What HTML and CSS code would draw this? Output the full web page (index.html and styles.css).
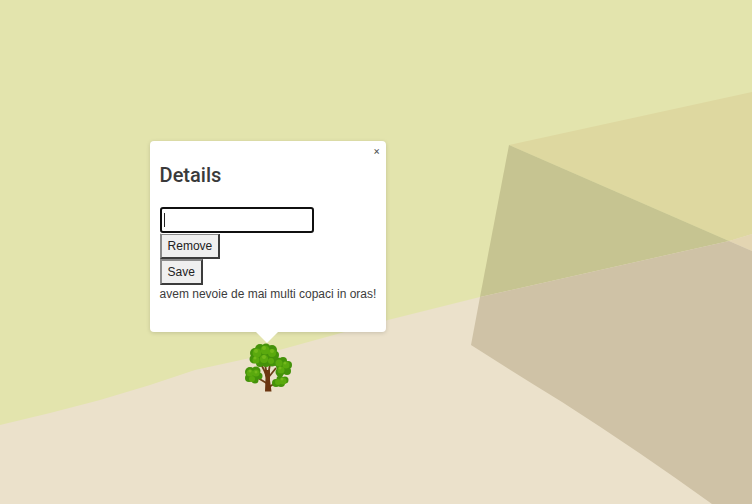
FILE: index.html
```html
<!DOCTYPE html>
<html lang="en">
<head>
  <meta charset="UTF-8">
  <title>Map</title>
  <link rel="stylesheet" href="styles.css">
</head>
<body>
  <div class="map">
    <svg class="map-bg" width="752" height="504" viewBox="0 0 752 504">
      <rect class="land" width="752" height="504"/>
      <path class="grass" d="M0 0H752V234L729 241L480 297L388 320L250 358L195 370L150 385L100 400L50 413L0 425Z"/>
      <path class="roof-grass" d="M509 145L752 92V234L729 241Z"/>
      <path class="roof-land" d="M729 241L752 234V251Z"/>
      <path class="block-grass" d="M509 145L729 241L480 297Z"/>
      <path class="block-land" d="M480 297L729 241L752 251V504H712Q640 452 562 402Q515 373 471 345Z"/>
    </svg>

    <div class="popup">
      <button class="popup-close" type="button">×</button>
      <h3>Details</h3>
      <div class="popup-form">
        <div class="field">
          <input type="text" autofocus>
          <span class="caret"></span>
        </div>
        <button type="button">Remove</button>
        <button type="button">Save</button>
      </div>
      <p>avem nevoie de mai multi copaci in oras!</p>
      <div class="popup-tip"></div>
    </div>

    <svg class="marker" width="50" height="50" viewBox="244 343 50 50">
      <path class="branches" d="M267 376L261 364M267 376L265 364M268 376L270 364M268 378L276 368M268 384L258 378M269 387L277 382"/>
      <path class="trunk" d="M265 391.500L265.500 378L264 370L270 370L270 380L271.500 391.500Z"/>
      <g class="leaf-dark">
        <circle cx="255" cy="353" r="5"/><circle cx="260" cy="349" r="5"/><circle cx="266" cy="348" r="4.500"/><circle cx="272" cy="350" r="5"/><circle cx="275" cy="355" r="4"/>
        <circle cx="254" cy="359" r="4.500"/><circle cx="260" cy="363" r="4"/><circle cx="266" cy="363" r="4"/><circle cx="272" cy="362" r="4.500"/><circle cx="264" cy="355" r="9"/>
        <circle cx="278" cy="362" r="4.500"/><circle cx="283" cy="361" r="4"/><circle cx="288" cy="365" r="4"/><circle cx="287" cy="371" r="4"/><circle cx="280" cy="372" r="4.500"/><circle cx="282" cy="366" r="6"/>
        <circle cx="250" cy="372" r="5"/><circle cx="256" cy="371" r="4.500"/><circle cx="259" cy="376" r="3.500"/><circle cx="249" cy="378" r="4"/><circle cx="255" cy="380" r="3.500"/><circle cx="253" cy="375" r="6"/>
        <circle cx="276" cy="383" r="4"/><circle cx="280" cy="379" r="3.500"/><circle cx="285" cy="380" r="3.500"/><circle cx="281" cy="383" r="4"/>
      </g>
      <g class="leaf-mid">
        <circle cx="257" cy="353" r="4.500"/><circle cx="265" cy="350" r="4.500"/><circle cx="272" cy="353" r="4"/>
        <circle cx="256" cy="360" r="3.500"/><circle cx="264" cy="359" r="4"/><circle cx="271" cy="361" r="3"/>
        <circle cx="279" cy="363" r="3.500"/><circle cx="286" cy="365" r="3.500"/><circle cx="281" cy="370" r="3.500"/>
        <circle cx="250" cy="373" r="3.500"/><circle cx="256" cy="373" r="3.500"/><circle cx="252" cy="379" r="3"/>
        <circle cx="278" cy="382" r="3"/><circle cx="283" cy="381" r="3.500"/>
      </g>
      <g class="leaf-light">
        <circle cx="256" cy="351" r="2"/><circle cx="264" cy="348" r="2"/><circle cx="272" cy="351" r="2"/>
        <circle cx="255" cy="358" r="1.500"/><circle cx="264" cy="357" r="2"/>
        <circle cx="285" cy="363" r="1.500"/><circle cx="280" cy="368" r="1.500"/>
        <circle cx="250" cy="371" r="1.500"/><circle cx="256" cy="372" r="1.500"/><circle cx="282" cy="379" r="1.500"/>
      </g>
    </svg>
  </div>
</body>
</html>
```

FILE: styles.css
```css
body {
  margin: 0;
  font-family: "Liberation Sans", Arial, sans-serif;
  overflow: hidden;
}
.map {
  position: relative;
  width: 752px;
  height: 504px;
  overflow: hidden;
  background: #ebe1cb;
}
.map-bg {
  position: absolute;
  top: 0;
  left: 0;
}
.land {
  fill: #ebe1cb;
}
.grass {
  fill: #e3e4ad;
}
.roof-grass {
  fill: #ded8a0;
}
.roof-land {
  fill: #e3d5b2;
}
.block-grass {
  fill: #c6c491;
}
.block-land {
  fill: #cfc2a6;
}
.marker {
  position: absolute;
  left: 244px;
  top: 343px;
}
.branches {
  fill: none;
  stroke: #6b3f18;
  stroke-width: 1.8;
}
.trunk {
  fill: #6b3510;
}
.leaf-dark {
  fill: #44920a;
}
.leaf-mid {
  fill: #5aa90e;
}
.leaf-light {
  fill: #72b81a;
}
.popup {
  position: absolute;
  left: 149.6px;
  top: 141px;
  width: 216px;
  height: 171px;
  padding: 10px;
  background: white;
  border-radius: 4px;
  box-shadow: 0 1px 4px rgba(0,0,0,0.15);
  color: #3c3c3c;
  font-size: 12px;
  line-height: 18px;
}
.popup-close {
  position: absolute;
  top: 4px;
  right: 3px;
  width: 12px;
  height: 14px;
  padding: 0;
  border: none;
  background: none;
  color: #555;
  font: 11px/14px Roboto, sans-serif;
}
.popup h3 {
  margin: 9px 0 17px;
  font-family: Roboto, sans-serif;
  font-size: 20px;
  font-weight: 500;
  line-height: 30px;
  color: #3a3a3a;
}
.popup-form {
  display: flex;
  flex-direction: column;
  align-items: flex-start;
}
.field {
  position: relative;
  height: 26px;
}
.field input {
  display: block;
  box-sizing: border-box;
  width: 154px;
  height: 26px;
  padding: 1px 2px;
  font-size: 12px;
  caret-color: transparent;
}
.caret {
  position: absolute;
  left: 4px;
  top: 6px;
  width: 1px;
  height: 14px;
  background: #222;
}
.popup-form button {
  height: 26px;
  padding: 2px 6px;
  border: 2px solid;
  border-color: #8a8a8a #3c3c3c #3c3c3c #8a8a8a;
  background: #efefef;
  color: #222;
  font: 12px/18px "Liberation Sans", Arial, sans-serif;
}
.popup p {
  margin: 0;
  white-space: nowrap;
}
.popup-tip {
  position: absolute;
  left: 106px;
  top: 191px;
  width: 0;
  height: 0;
  border-left: 11px solid transparent;
  border-right: 11px solid transparent;
  border-top: 11px solid white;
}
```
